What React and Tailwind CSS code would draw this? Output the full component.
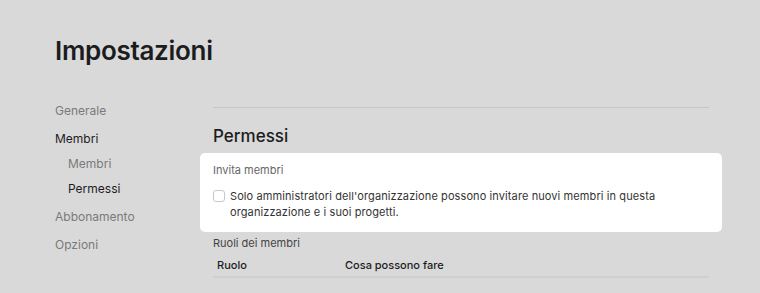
const NAV = [
  { label: 'Generale', h: 'h-[28px]', tone: 'muted' },
  { label: 'Membri', h: 'h-[25px]', tone: 'strong' },
  { label: 'Membri', h: 'h-[25px] pl-[13px]', tone: 'muted' },
  { label: 'Permessi', h: 'h-[28px] pl-[13px]', tone: 'strong' },
  { label: 'Abbonamento', h: 'h-[28px]', tone: 'muted' },
  { label: 'Opzioni', h: 'h-[28px]', tone: 'muted' },
]

function Sidebar() {
  return (
    <nav className="w-[158px] shrink-0 pt-[37px] flex flex-col text-[12px]">
      {NAV.map((item, i) => (
        <div
          key={i}
          className={`${item.h} ${item.tone === 'strong' ? 'text-[#1c1c1e]' : 'text-[#7a7a7a]'} leading-[16px]`}
        >
          {item.label}
        </div>
      ))}
    </nav>
  )
}

export default function App() {
  return (
    <div className="h-[293px] bg-[#d9d9d9] pl-[55px] font-['Inter',sans-serif] text-[#1c1c1e] overflow-hidden">
      <h1 className="pt-[36px] text-[26px] leading-[30px] font-semibold tracking-[-0.3px]">Impostazioni</h1>
      <div className="flex">
        <Sidebar />
        <main className="w-[496px] shrink-0 pt-[41px]">
          <div className="border-t border-[#c6c6c6]" />
          <h2 className="mt-[17px] text-[17px] leading-[22px] font-medium">Permessi</h2>
          <section className="mt-[6px] -mx-[13px] bg-white rounded-[5px] px-[13px] pt-[9px] pb-[12px]">
            <div className="text-[11px] leading-[16px] text-[#666]">Invita membri</div>
            <label className="mt-[10px] flex gap-[5px] text-[11px] leading-[16px] tracking-[0.1px] text-[#333]">
              <span className="mt-[2px] w-[12px] h-[12px] shrink-0 rounded-[3px] border border-[#c8c8c8] bg-white" />
              <span>Solo amministratori dell'organizzazione possono invitare nuovi membri in questa organizzazione e i suoi progetti.</span>
            </label>
          </section>
          <div className="mt-[3px] text-[11px] leading-[16px] text-[#444]">Ruoli dei membri</div>
          <div className="mt-[6px] flex border-b-2 border-[#cfcfcf] pb-[3px] text-[11px] leading-[16px] font-medium">
            <div className="w-[132px] pl-[4px]">Ruolo</div>
            <div>Cosa possono fare</div>
          </div>
        </main>
      </div>
    </div>
  )
}
